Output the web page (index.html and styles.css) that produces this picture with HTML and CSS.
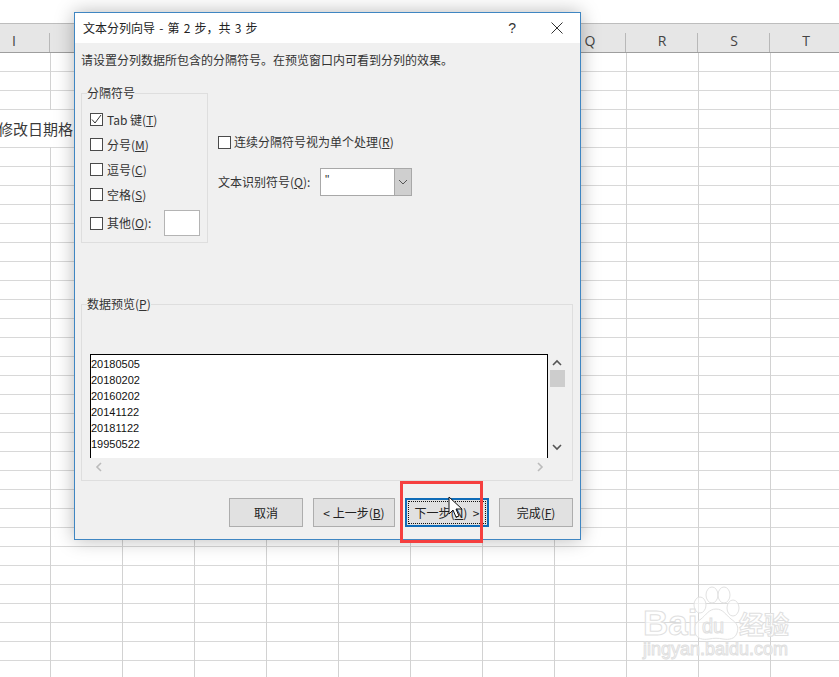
FILE: index.html
```html
<!DOCTYPE html>
<html lang="zh">
<head>
<meta charset="utf-8">
<title>文本分列向导</title>
<link rel="stylesheet" href="styles.css">
</head>
<body>
<div class="sheet">
  <div class="col-head">
    <span>I</span><span></span><span></span><span></span><span></span><span></span><span></span><span></span><span>Q</span><span>R</span><span>S</span><span>T</span>
  </div>
  <div class="grid"></div>
</div>
<div class="cell">修改日期格</div>

<svg class="watermark" width="170" height="90" viewBox="0 0 170 90">
  <g class="wm-shape">
    <ellipse cx="62" cy="15" rx="6" ry="8"/>
    <ellipse cx="74" cy="15" rx="6" ry="8"/>
    <ellipse cx="50" cy="25" rx="6" ry="8"/>
    <ellipse cx="83" cy="28" rx="6" ry="8"/>
    <path d="M66 29c7 0 10 6 15 10 6 4 8 8 6 14-2 6-8 7-14 6-5-1-9-1-14 0-6 1-12 0-14-6-2-6 0-10 6-14 5-4 8-10 15-10z"/>
  </g>
  <text class="wm-text wm-bai" x="-7" y="55">Bai</text>
  <text class="wm-text wm-du" x="52" y="53">du</text>
  <text class="wm-text wm-cn" x="89" y="54">经验</text>
  <text class="wm-text wm-url" x="-7" y="75">jingyan.baidu.com</text>
</svg>

<div class="dialog">
  <div class="titlebar">
    <span class="title">文本分列向导 - 第 2 步，共 3 步</span>
    <span class="help">?</span>
    <svg class="close" width="12" height="12" viewBox="0 0 12 12"><path d="M.5.5l11 11M11.5.5l-11 11"/></svg>
  </div>
  <div class="body">
    <p class="intro">请设置分列数据所包含的分隔符号。在预览窗口内可看到分列的效果。</p>
    <div class="options">
      <fieldset class="group delims">
        <legend>分隔符号</legend>
        <div class="row"><span class="check on"><svg width="11" height="11" viewBox="0 0 11 11"><path d="M1 5.500l3 3.500 6-8"/></svg></span><span>Tab 键(<u>T</u>)</span></div>
        <div class="row"><span class="check"></span><span>分号(<u>M</u>)</span></div>
        <div class="row"><span class="check"></span><span>逗号(<u>C</u>)</span></div>
        <div class="row"><span class="check"></span><span>空格(<u>S</u>)</span></div>
        <div class="row row-other"><span class="check"></span><span class="lift">其他(<u>O</u>):</span><span class="other-input"></span></div>
      </fieldset>
      <div class="side">
        <div class="side-check"><span class="check"></span><span class="lift">连续分隔符号视为单个处理(<u>R</u>)</span></div>
        <div class="side-combo">
          <span class="combo-label lift">文本识别符号(<u>Q</u>):</span>
          <div class="combo">
            <span class="combo-value">"</span>
            <span class="combo-btn"><svg width="10" height="6" viewBox="0 0 10 6"><path d="M1 1l4 4 4-4"/></svg></span>
          </div>
        </div>
      </div>
    </div>
    <fieldset class="group preview">
      <legend>数据预览(<u>P</u>)</legend>
      <div class="preview-main">
        <div class="preview-box">
          <div>20180505</div>
          <div>20180202</div>
          <div>20160202</div>
          <div>20141122</div>
          <div>20181122</div>
          <div>19950522</div>
        </div>
        <div class="vscroll">
          <svg class="chev" width="10" height="7" viewBox="0 0 10 7"><path d="M1 6l4-4 4 4"/></svg>
          <div class="thumb"></div>
          <svg class="chev" width="10" height="7" viewBox="0 0 10 7"><path d="M1 1l4 4 4-4"/></svg>
        </div>
      </div>
      <div class="hscroll">
        <svg class="chev-h" width="7" height="10" viewBox="0 0 7 10"><path d="M6 1L2 5l4 4"/></svg>
        <svg class="chev-h" width="7" height="10" viewBox="0 0 7 10"><path d="M1 1l4 4-4 4"/></svg>
      </div>
    </fieldset>
    <div class="footer">
      <div class="btn btn-cancel">取消</div>
      <div class="btn btn-prev">&lt; 上一步(<u>B</u>)</div>
      <div class="btn btn-next"><span class="focus">下一步(<u>N</u>)&nbsp; &gt;</span></div>
      <div class="btn btn-cancel">完成(<u>F</u>)</div>
    </div>
  </div>
</div>

<div class="redbox"></div>
<svg class="cursor" width="16" height="24" viewBox="0 0 16 24"><path d="M1 1v17l4-4 3 7 3-1-3-7h6z"/></svg>
</body>
</html>
```

FILE: styles.css
```css
* { box-sizing: border-box; }
html, body { margin: 0; height: 100%; overflow: hidden; }
body {
  width: 839px;
  height: 677px;
  background: #fff;
  position: relative;
  font-family: "Noto Sans CJK SC", "Noto Sans", sans-serif;
  font-size: 12px;
  color: #222;
}
u { text-decoration: underline; text-underline-offset: 1px; text-decoration-thickness: 1px; }

.sheet { height: 677px; padding-top: 23px; display: flex; flex-direction: column; }
.col-head {
  height: 30px;
  flex: none;
  display: flex;
  margin-left: -22px;
  background: #e6e6e6;
  border-top: 1px solid #bdbdbd;
  border-bottom: 1px solid #9e9e9e;
  font: 14px/33px "Open Sans", "Noto Sans", sans-serif;
  color: #444;
  width: 900px;
}
.col-head span {
  width: 72px;
  flex: none;
  text-align: center;
  background: linear-gradient(#b8b8b8, #b8b8b8) right 9px / 1px 19px no-repeat;
}
.grid {
  flex: 1;
  background-color: #fff;
  background-image:
    linear-gradient(to right, #d2d2d2 1px, transparent 1px),
    linear-gradient(to bottom, #d8d8d8 1px, transparent 1px);
  background-size: 72px 100%, 100% 19px;
  background-position: 50px 0, 0 18px;
}
.cell {
  position: absolute;
  left: 0;
  top: 110px;
  width: 74px;
  height: 37px;
  background: #fff;
  font-size: 15px;
  line-height: 37px;
  color: #3a3a3a;
  white-space: nowrap;
  text-indent: -2px;
  overflow: hidden;
}

.watermark { position: absolute; left: 650px; top: 580px; overflow: visible; }
.wm-shape { fill: rgba(255,255,255,.6); stroke: #e2e2e2; stroke-width: 1; }
.wm-text { fill: rgba(255,255,255,.7); stroke: #e0e0e0; stroke-width: 1; font-family: "Liberation Sans", sans-serif; }
.wm-bai { font-size: 35px; font-weight: 700; }
.wm-du { font-size: 20px; }
.wm-cn { font-size: 25px; font-weight: 700; font-family: "Noto Sans CJK SC", sans-serif; }
.wm-url { font-size: 18px; }

.dialog {
  position: absolute;
  left: 74px;
  top: 12px;
  width: 507px;
  height: 528px;
  background: #f0f0f0;
  border: 1px solid #3f86c2;
  box-shadow: 0 0 18px rgba(0,0,0,.28);
}
.titlebar {
  height: 30px;
  background: #fff;
  display: flex;
  align-items: center;
  padding: 0 17px 0 8px;
}
.title { font-size: 12px; word-spacing: 1.500px; flex: 1; color: #222; padding-bottom: 2px; }
.help { font: 14px "Liberation Sans", sans-serif; margin-right: 35px; color: #333; }
.close path { stroke: #333; fill: none; stroke-width: 1; }

.body { padding: 0 7px 0 6px; }
.intro { margin: 0; padding-top: 9px; height: 25px; line-height: 16px; white-space: nowrap; color: #333; }

.options { display: flex; margin-top: 18px; }
.group {
  margin: 0;
  border: 1px solid #dedede;
  min-width: 0;
}
.group legend { padding: 0; margin-left: -3px; line-height: 14px; font-size: 12px; color: #333; }
.delims { width: 127px; height: 157px; padding: 7px 0 0 8px; }
.row { display: flex; align-items: center; height: 25px; gap: 4px; white-space: nowrap; color: #333; }
.row-other { height: 26px; margin-top: 3px; }
.check {
  width: 13px;
  height: 13px;
  flex: none;
  background: #fff;
  border: 1px solid #4a4a4a;
  display: flex;
  align-items: center;
  justify-content: center;
}
.check path { fill: none; stroke: #333; stroke-width: 1; }
.other-input {
  width: 36px;
  height: 26px;
  background: #fff;
  border: 1px solid #b4b4b4;
  margin-left: 9px;
}

.side { margin-left: 10px; padding-top: 50px; color: #333; }
.side-check { display: flex; align-items: center; gap: 3px; height: 13px; white-space: nowrap; }
.lift { padding-bottom: 2px; }
.side-combo { display: flex; align-items: center; margin-top: 19px; height: 28px; }
.combo-label { width: 102px; white-space: nowrap; }
.combo {
  width: 92px;
  height: 28px;
  display: flex;
  background: #fff;
  border: 1px solid #a8a8a8;
}
.combo-value { flex: 1; padding-left: 4px; font: 12px/22px "Liberation Sans", sans-serif; }
.combo-btn {
  width: 17px;
  background: #cfcfcf;
  border-left: 1px solid #a8a8a8;
  display: flex;
  align-items: center;
  justify-content: center;
}
.combo-btn path { fill: none; stroke: #555; stroke-width: 1; }

.preview { margin-top: 54px; height: 184px; width: 492px; padding: 43px 0 0 8px; }
.preview-main { display: flex; height: 104px; }
.preview-box {
  width: 458px;
  background: #fff;
  border: 1px solid #000;
  border-bottom: 0;
  padding-top: 1px;
  font: 11px/16px "Liberation Sans", sans-serif;
  color: #111;
}
.vscroll { width: 16px; margin-left: 1px; display: flex; flex-direction: column; align-items: center; padding-top: 5px; }
.chev path, .chev-h path { fill: none; stroke: #555; stroke-width: 1.600; }
.chev-h path { stroke: #bbb; }
.thumb { width: 15px; height: 17px; background: #cdcdcd; margin: 4px 0 57px; }
.hscroll {
  height: 17px;
  width: 456px;
  display: flex;
  justify-content: space-between;
  align-items: center;
  padding: 0 2px 0 5px;
}

.footer { display: flex; justify-content: flex-end; gap: 10px; margin-top: 17px; }
.btn {
  height: 29px;
  background: #e1e1e1;
  border: 1px solid #adadad;
  display: flex;
  align-items: center;
  justify-content: center;
  color: #222;
  white-space: nowrap;
}
.btn-cancel { width: 74px; }
.btn-prev { width: 82px; }
.btn-next { width: 84px; border: 2px solid #0f6cb8; padding: 1px; }
.focus {
  display: flex;
  align-items: center;
  justify-content: center;
  width: 100%;
  height: 100%;
  border: 1px dotted #111;
}

.redbox {
  position: absolute;
  left: 400px;
  top: 481px;
  width: 83px;
  height: 62px;
  border: 3px solid #f53f3f;
}
.cursor { position: absolute; left: 448px; top: 496px; }
.cursor path { fill: #fff; stroke: #111; stroke-width: 1; }
```
